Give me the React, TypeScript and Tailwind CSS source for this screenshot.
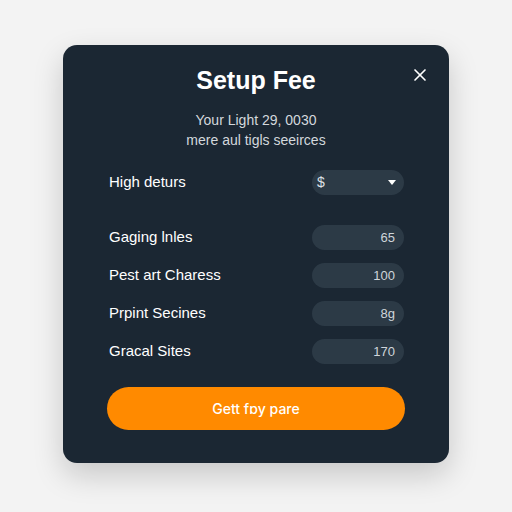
import { X } from "lucide-react";

const rows = [
  { label: "Gaging lnles", value: "65" },
  { label: "Pest art Charess", value: "100" },
  { label: "Prpint Secines", value: "8g" },
  { label: "Gracal Sites", value: "170" },
];

export default function App() {
  return (
    <div className="min-h-[512px] w-full bg-[#f3f3f3] pt-[45px] flex justify-center font-['Liberation_Sans','Inter',sans-serif]">
      <div className="relative w-[386px] h-[418px] rounded-[14px] bg-[#1b2733] px-[44px] pt-[18px] shadow-[0_12px_30px_rgba(0,0,0,0.18)]">
        <button className="absolute right-[19px] top-[20px] text-white">
          <X size={20} strokeWidth={2} />
        </button>
        <h1 className="text-center text-[25px] leading-[34px] font-bold text-white">Setup Fee</h1>
        <div className="mt-[13px] text-center text-[14px] leading-[20px] text-[#d3d8dd]">
          <p>Your Light 29, 0030</p>
          <p>mere aul tigls seeirces</p>
        </div>

        <div className="mt-[20px] flex items-center justify-between pl-[2px] pr-[1px]">
          <span className="text-[15px] text-white">High deturs</span>
          <div className="flex h-[25px] w-[92px] items-center justify-between rounded-full bg-[#2c3a46] pl-[5px] pr-[8px]">
            <span className="text-[14px] text-[#dde2e6]">$</span>
            <svg width="8" height="5" viewBox="0 0 8 5"><path d="M0 0h8L4 5z" fill="#ffffff" /></svg>
          </div>
        </div>

        <div className="mt-[30px] flex flex-col gap-[13px]">
          {rows.map((r) => (
            <div key={r.label} className="flex items-center justify-between pl-[2px] pr-[1px]">
              <span className="text-[15px] text-white">{r.label}</span>
              <div className="flex h-[25px] w-[92px] items-center justify-end rounded-full bg-[#2c3a46] pr-[9px]">
                <span className="text-[13px] text-[#cfd5da]">{r.value}</span>
              </div>
            </div>
          ))}
        </div>

        <button className="mt-[23px] h-[43px] w-full rounded-full bg-[#ff8a00] font-['Inter',sans-serif] text-[14px] font-medium text-white">
          Gett fɒy pare
        </button>
      </div>
    </div>
  );
}
